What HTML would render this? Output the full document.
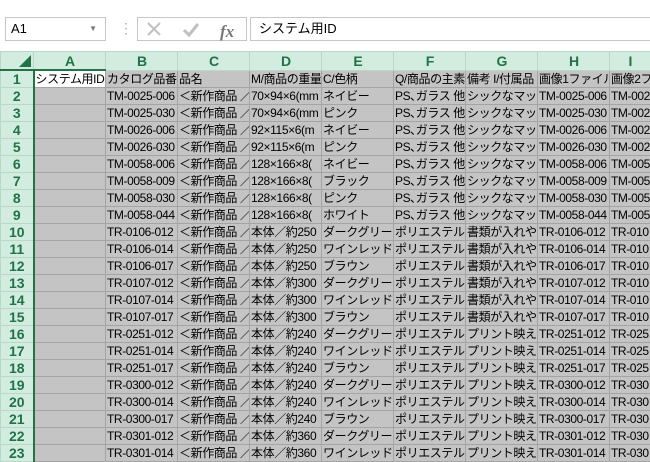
<!DOCTYPE html><html><head><meta charset="utf-8"><style>
body{margin:0;width:650px;height:450px;overflow:hidden;background:#fff;font-family:"Liberation Sans","Noto Sans CJK JP",sans-serif;position:relative}
.box{position:absolute;border:1px solid #c6c6c6;background:#fff;box-sizing:border-box}
table{position:absolute;left:0;top:51px;border-collapse:collapse;table-layout:fixed;width:650px}
td{height:16px;padding:0 0 0 1px;border:1px solid #a4a4a4;background:#c4c4c4;font-size:12px;letter-spacing:-0.4px;line-height:16px;white-space:nowrap;overflow:hidden;color:#000}
tr.h td{background:#d3ece0;color:#217346;font-weight:bold;text-align:center;border-color:#b8d8c8;font-size:14px;letter-spacing:0;height:17px}
td.r{background:#d3ece0;color:#217346;font-weight:bold;text-align:center;border-color:#b8d8c8;font-size:14px;letter-spacing:0;padding:0;border-right:2px solid #217346}
td.w{background:#fff}
</style></head><body>
<div class="box" style="left:5px;top:17px;width:101px;height:24px;font-size:13px;line-height:22px;padding-left:5px">A1<span style="position:absolute;right:8px;top:0;font-size:8px;color:#777">▼</span></div>
<div style="position:absolute;top:20px;color:#aaa;font-size:14px;left:119px">⋮</div>
<div class="box" style="left:137px;top:17px;width:110px;height:24px">
<svg width="110" height="24" style="position:absolute;left:0;top:0"><path d="M10 5L22 17M22 5L10 17" stroke="#c0c0c0" stroke-width="2"/><path d="M46 12l5 5l9-11" stroke="#c0c0c0" stroke-width="3" fill="none"/><text x="82" y="19" font-family="Liberation Serif,serif" font-style="italic" font-weight="bold" font-size="17" fill="#777">fx</text></svg></div>
<div class="box" style="left:250px;top:17px;width:410px;height:24px;font-size:13px;line-height:22px;padding-left:8px">システム用ID</div>
<table>
<colgroup><col style="width:33px"><col style="width:72px"><col style="width:72px"><col style="width:72px"><col style="width:72px"><col style="width:72px"><col style="width:72px"><col style="width:72px"><col style="width:72px"><col style="width:41px"></colgroup>
<tr class="h"><td style="border-bottom:2px solid #217346"></td><td style="border-bottom:2px solid #217346">A</td><td>B</td><td>C</td><td>D</td><td>E</td><td>F</td><td>G</td><td>H</td><td>I</td></tr>
<tr><td class="r">1</td><td class="w">システム用ID</td><td>カタログ品番</td><td>品名</td><td>M/商品の重量</td><td>C/色柄</td><td>Q/商品の主素</td><td>備考 I/付属品</td><td>画像1ファイル</td><td>画像2ファ</td></tr>
<tr><td class="r">2</td><td></td><td>TM-0025-006</td><td>＜新作商品 ／</td><td>70×94×6(mm</td><td>ネイビー</td><td>PS､ガラス 他</td><td>シックなマット</td><td>TM-0025-006</td><td>TM-002</td></tr>
<tr><td class="r">3</td><td></td><td>TM-0025-030</td><td>＜新作商品 ／</td><td>70×94×6(mm</td><td>ピンク</td><td>PS､ガラス 他</td><td>シックなマット</td><td>TM-0025-030</td><td>TM-002</td></tr>
<tr><td class="r">4</td><td></td><td>TM-0026-006</td><td>＜新作商品 ／</td><td>92×115×6(m</td><td>ネイビー</td><td>PS､ガラス 他</td><td>シックなマット</td><td>TM-0026-006</td><td>TM-002</td></tr>
<tr><td class="r">5</td><td></td><td>TM-0026-030</td><td>＜新作商品 ／</td><td>92×115×6(m</td><td>ピンク</td><td>PS､ガラス 他</td><td>シックなマット</td><td>TM-0026-030</td><td>TM-002</td></tr>
<tr><td class="r">6</td><td></td><td>TM-0058-006</td><td>＜新作商品 ／</td><td>128×166×8(</td><td>ネイビー</td><td>PS､ガラス 他</td><td>シックなマット</td><td>TM-0058-006</td><td>TM-005</td></tr>
<tr><td class="r">7</td><td></td><td>TM-0058-009</td><td>＜新作商品 ／</td><td>128×166×8(</td><td>ブラック</td><td>PS､ガラス 他</td><td>シックなマット</td><td>TM-0058-009</td><td>TM-005</td></tr>
<tr><td class="r">8</td><td></td><td>TM-0058-030</td><td>＜新作商品 ／</td><td>128×166×8(</td><td>ピンク</td><td>PS､ガラス 他</td><td>シックなマット</td><td>TM-0058-030</td><td>TM-005</td></tr>
<tr><td class="r">9</td><td></td><td>TM-0058-044</td><td>＜新作商品 ／</td><td>128×166×8(</td><td>ホワイト</td><td>PS､ガラス 他</td><td>シックなマット</td><td>TM-0058-044</td><td>TM-005</td></tr>
<tr><td class="r">10</td><td></td><td>TR-0106-012</td><td>＜新作商品 ／</td><td>本体／約250</td><td>ダークグリーン</td><td>ポリエステル</td><td>書類が入れや</td><td>TR-0106-012</td><td>TR-010</td></tr>
<tr><td class="r">11</td><td></td><td>TR-0106-014</td><td>＜新作商品 ／</td><td>本体／約250</td><td>ワインレッド</td><td>ポリエステル</td><td>書類が入れや</td><td>TR-0106-014</td><td>TR-010</td></tr>
<tr><td class="r">12</td><td></td><td>TR-0106-017</td><td>＜新作商品 ／</td><td>本体／約250</td><td>ブラウン</td><td>ポリエステル</td><td>書類が入れや</td><td>TR-0106-017</td><td>TR-010</td></tr>
<tr><td class="r">13</td><td></td><td>TR-0107-012</td><td>＜新作商品 ／</td><td>本体／約300</td><td>ダークグリーン</td><td>ポリエステル</td><td>書類が入れや</td><td>TR-0107-012</td><td>TR-010</td></tr>
<tr><td class="r">14</td><td></td><td>TR-0107-014</td><td>＜新作商品 ／</td><td>本体／約300</td><td>ワインレッド</td><td>ポリエステル</td><td>書類が入れや</td><td>TR-0107-014</td><td>TR-010</td></tr>
<tr><td class="r">15</td><td></td><td>TR-0107-017</td><td>＜新作商品 ／</td><td>本体／約300</td><td>ブラウン</td><td>ポリエステル</td><td>書類が入れや</td><td>TR-0107-017</td><td>TR-010</td></tr>
<tr><td class="r">16</td><td></td><td>TR-0251-012</td><td>＜新作商品 ／</td><td>本体／約240</td><td>ダークグリーン</td><td>ポリエステル</td><td>プリント映えす</td><td>TR-0251-012</td><td>TR-025</td></tr>
<tr><td class="r">17</td><td></td><td>TR-0251-014</td><td>＜新作商品 ／</td><td>本体／約240</td><td>ワインレッド</td><td>ポリエステル</td><td>プリント映えす</td><td>TR-0251-014</td><td>TR-025</td></tr>
<tr><td class="r">18</td><td></td><td>TR-0251-017</td><td>＜新作商品 ／</td><td>本体／約240</td><td>ブラウン</td><td>ポリエステル</td><td>プリント映えす</td><td>TR-0251-017</td><td>TR-025</td></tr>
<tr><td class="r">19</td><td></td><td>TR-0300-012</td><td>＜新作商品 ／</td><td>本体／約240</td><td>ダークグリーン</td><td>ポリエステル</td><td>プリント映えす</td><td>TR-0300-012</td><td>TR-030</td></tr>
<tr><td class="r">20</td><td></td><td>TR-0300-014</td><td>＜新作商品 ／</td><td>本体／約240</td><td>ワインレッド</td><td>ポリエステル</td><td>プリント映えす</td><td>TR-0300-014</td><td>TR-030</td></tr>
<tr><td class="r">21</td><td></td><td>TR-0300-017</td><td>＜新作商品 ／</td><td>本体／約240</td><td>ブラウン</td><td>ポリエステル</td><td>プリント映えす</td><td>TR-0300-017</td><td>TR-030</td></tr>
<tr><td class="r">22</td><td></td><td>TR-0301-012</td><td>＜新作商品 ／</td><td>本体／約360</td><td>ダークグリーン</td><td>ポリエステル</td><td>プリント映えす</td><td>TR-0301-012</td><td>TR-030</td></tr>
<tr><td class="r">23</td><td></td><td>TR-0301-014</td><td>＜新作商品 ／</td><td>本体／約360</td><td>ワインレッド</td><td>ポリエステル</td><td>プリント映えす</td><td>TR-0301-014</td><td>TR-030</td></tr>
</table>
<svg width="12" height="12" style="position:absolute;left:19px;top:55px"><path d="M12 0L12 12L0 12Z" fill="#217346"/></svg>
</body></html>
